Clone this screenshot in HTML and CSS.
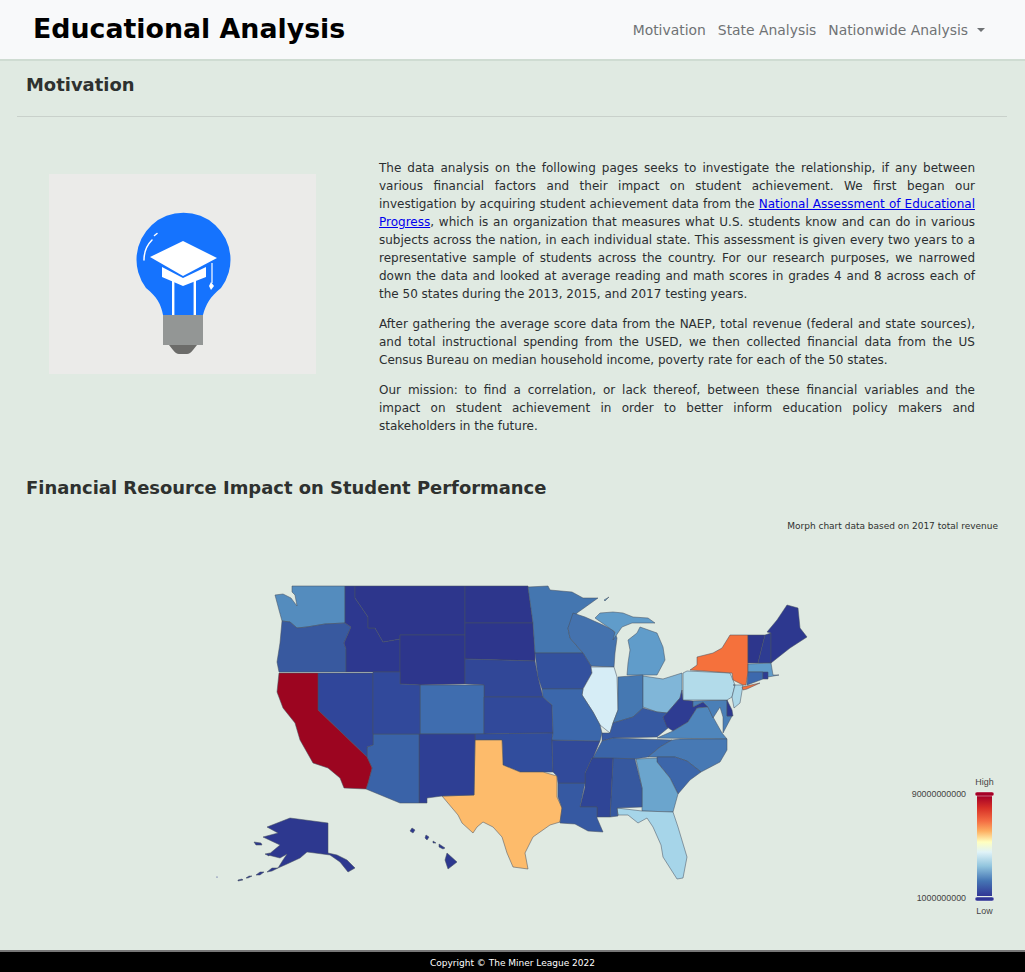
FILE: index.html
```html
<!DOCTYPE html>
<html lang="en">
<head>
  <meta charset="UTF-8">
  <meta name="viewport" content="width=device-width, initial-scale=1.0">
  <title>Educational Analysis</title>
  <link rel="stylesheet" href="styles.css">
</head>
<body>

  <nav class="navbar">
    <a class="brand" href="#">Educational Analysis</a>
    <ul class="nav-links">
      <li><a href="#">Motivation</a></li>
      <li><a href="#">State Analysis</a></li>
      <li><a href="#" class="dropdown">Nationwide Analysis</a></li>
    </ul>
  </nav>

  <main class="content">
    <h2 class="section-title">Motivation</h2>
    <hr class="divider">

    <section class="motivation">
      <div class="picture">
        <svg class="bulb" viewBox="0 0 267 200" width="267" height="200">
          <path fill="#1573fe" d="M114 141C112 130 108 123 97 114A47 47 0 1 1 172 114C161 123 157 130 154 141Z"/>
          <rect x="114" y="141" width="40" height="30" fill="#939695"/>
          <path fill="#6c6c6a" d="M120 171H148L144 176Q141 180 138 180H130Q127 180 124 176Z"/>
          <rect x="123" y="106" width="2.4" height="35" fill="#fff"/>
          <rect x="144.600" y="106" width="2.4" height="35" fill="#fff"/>
          <path fill="#fff" d="M113 93L134 104L157 93V103L134 112L113 103Z"/>
          <path fill="#fff" d="M134 67L168 84L134 102L101 83Z"/>
          <path fill="none" stroke="#fff" stroke-width="1.200" d="M163 89V109"/>
          <path fill="#fff" d="M162 108L165 112L162 116L160 112Z"/>
          <path fill="none" stroke="#fff" stroke-width="1.500" stroke-linecap="round" d="M95 86C95 77 98 71 103 66M105.500 61.500L108 59.500"/>
        </svg>
      </div>
      <div class="copy">
        <p>The data analysis on the following pages seeks to investigate the relationship, if any between various financial factors and their impact on student achievement. We first began our investigation by acquiring student achievement data from the <a href="#">National Assessment of Educational Progress</a>, which is an organization that measures what U.S. students know and can do in various subjects across the nation, in each individual state. This assessment is given every two years to a representative sample of students across the country. For our research purposes, we narrowed down the data and looked at average reading and math scores in grades 4 and 8 across each of the 50 states during the 2013, 2015, and 2017 testing years.</p>
        <p>After gathering the average score data from the NAEP, total revenue (federal and state sources), and total instructional spending from the USED, we then collected financial data from the US Census Bureau on median household income, poverty rate for each of the 50 states.</p>
        <p>Our mission: to find a correlation, or lack thereof, between these financial variables and the impact on student achievement in order to better inform education policy makers and stakeholders in the future.</p>
      </div>
    </section>

    <h2 class="section-title chart-title">Financial Resource Impact on Student Performance</h2>
    <p class="chart-note">Morph chart data based on 2017 total revenue</p>

    <svg class="chart" viewBox="0 570 1025 350" width="1025" height="350">
      <defs>
        <linearGradient id="scale" x1="0" y1="0" x2="0" y2="1">
          <stop offset="0" stop-color="#a50026"/>
          <stop offset="0.12" stop-color="#d73027"/>
          <stop offset="0.25" stop-color="#f46d43"/>
          <stop offset="0.35" stop-color="#fdae61"/>
          <stop offset="0.46" stop-color="#ffffbf"/>
          <stop offset="0.56" stop-color="#e0f3f8"/>
          <stop offset="0.7" stop-color="#92c5de"/>
          <stop offset="0.85" stop-color="#4575b4"/>
          <stop offset="1" stop-color="#313695"/>
        </linearGradient>
      </defs>
      <g class="states">
        <polygon fill="#548cbe" points="292,586 345,586 345,623 325,624 307,627 297,628 290,622 282,621 279,610 275,595 283,594 291,598 297,606 295,595 292,592"/>
        <polygon fill="#38599f" points="282,621 290,622 297,628 307,627 325,624 345,623 351,627 344,643 346,649 346,672 279,672 277,662 280,643"/>
        <polygon fill="#2d388f" points="345,586 355,586 355,598 368,617 368,628 375,628 383,642 400,639 400,672 346,672 346,649 344,643 351,627 345,623"/>
        <polygon fill="#2d368c" points="355,586 465,586 465,635 400,635 400,639 383,642 375,628 368,628 368,617 355,598"/>
        <polygon fill="#2d368c" points="400,635 465,635 465,684 420,685 400,684"/>
        <polygon fill="#2d368c" points="465,586 528,586 533,623 465,623"/>
        <polygon fill="#2d368c" points="465,623 533,623 535,653 535,661 465,659"/>
        <polygon fill="#314797" points="465,659 535,661 538,677 543,697 484,697 484,685 465,684"/>
        <polygon fill="#3f6daf" points="420,685 484,685 484,734 420,734"/>
        <polygon fill="#31499a" points="484,697 543,697 552,705 553,733 484,734"/>
        <polygon fill="#314d9d" points="475,734 553,733 552,740 553,772 543,772 520,772 503,765 502,740 475,740"/>
        <polygon fill="#fdbb6b" points="475,740 502,740 503,765 520,772 543,772 557,776 557,797 562,808 560,822 550,825 533,837 525,853 528,869 513,867 507,853 502,837 493,827 483,822 477,827 473,833 462,823 458,815 442,796 474,795"/>
        <polygon fill="#2e3f94" points="419,734 475,734 475,740 474,795 442,796 427,798 427,803 419,803"/>
        <polygon fill="#3a63a8" points="373,734 419,734 419,803 400,803 366,789 368,783 372,768 367,757 367,747 373,745"/>
        <polygon fill="#30469a" points="318,673 373,673 373,745 367,747 367,757 318,710"/>
        <polygon fill="#31499b" points="373,672 400,672 400,684 420,685 420,734 373,734"/>
        <polygon fill="#9c0520" points="279,673 318,673 318,710 367,757 372,768 368,783 366,789 344,788 340,778 328,768 313,763 300,740 295,723 283,708 277,692"/>
        <polygon fill="#4476b0" points="528,587 548,586 550,590 572,592 583,598 598,598 577,613 568,628 570,638 583,653 535,653 533,623"/>
        <polygon fill="#4472ae" points="573,613 585,617 603,625 613,630 615,633 617,638 615,653 614,667 591,666 583,653 570,638 568,628"/>
        <polygon fill="#609cca" points="595,618 600,613 613,612 623,613 633,617 648,618 655,623 640,623 632,623 622,627 613,640 615,632"/>
        <polygon fill="#609cca" points="640,627 657,633 663,647 665,660 657,675 627,675 628,663 630,650 628,640 637,633"/>
        <polygon fill="#609cca" points="604,600 609,597 605,601"/>
        <polygon fill="#33519e" points="535,653 583,653 591,666 592,673 583,689 542,689 538,677"/>
        <polygon fill="#d6edf6" points="591,667 614,667 617,677 618,710 613,723 610,733 600,725 593,712 582,695 583,689 592,673"/>
        <polygon fill="#4578b2" points="618,677 643,675 643,708 633,717 613,723 618,710"/>
        <polygon fill="#80b6d8" points="643,676 663,679 682,673 682,690 680,698 667,713 657,712 643,707"/>
        <polygon fill="#3659a2" points="613,723 633,717 643,708 657,712 667,713 663,717 668,728 657,737 613,738 602,741 602,733 610,733"/>
        <polygon fill="#2e3c92" points="682,690 683,700 693,701 693,707 703,702 708,707 697,708 688,722 673,731 667,727 663,717 667,713 680,698"/>
        <polygon fill="#4f86bc" points="657,738 673,731 688,722 697,708 708,707 713,717 722,733 727,739"/>
        <polygon fill="#4a7fb7" points="693,701 727,700 727,716 732,716 723,733 723,717 720,707 713,718 708,707 703,702 693,707"/>
        <polygon fill="#2d388f" points="727,700 732,710 733,716 727,716"/>
        <polygon fill="#b2dbea" points="683,673 687,671 730,673 735,685 732,697 727,700 683,700"/>
        <polygon fill="#add8e8" points="733,685 743,685 740,703 734,708 732,697 735,685"/>
        <polygon fill="#f5713c" points="690,670 697,665 697,657 713,653 722,648 730,635 748,635 748,672 746,685 743,685 733,680 732,673"/>
        <polygon fill="#f5713c" points="742,687 760,683 747,689 743,690"/>
        <polygon fill="#2d368c" points="748,635 765,635 758,663 748,663"/>
        <polygon fill="#2e3c92" points="765,635 771,633 771,663 758,663"/>
        <polygon fill="#2d388f" points="767,632 777,620 787,605 798,608 800,628 807,637 790,648 771,663 771,633"/>
        <polygon fill="#609cca" points="748,664 771,663 773,675 779,675 768,677 763,672 748,672"/>
        <polygon fill="#3d69ad" points="748,672 763,672 763,679 747,685"/>
        <polygon fill="#2e3c92" points="763,672 768,672 768,679 763,679"/>
        <polygon fill="#3a64a8" points="602,741 613,738 672,740 660,747 648,757 635,759 593,758"/>
        <polygon fill="#4779b4" points="672,740 680,739 727,739 727,750 720,762 701,772 687,761 675,757 657,757 648,757 660,747"/>
        <polygon fill="#3c66aa" points="657,757 675,757 687,761 701,772 690,780 678,794 670,778 657,762"/>
        <polygon fill="#6ba5cd" points="636,759 657,758 657,762 670,778 678,794 673,812 642,811 642,788"/>
        <polygon fill="#a6d5e9" points="617,808 642,811 673,812 678,827 687,857 683,878 677,879 663,857 661,845 653,827 647,818 638,823 628,815 618,815"/>
        <polygon fill="#36589f" points="613,758 635,759 642,788 642,807 617,808 618,816 610,817"/>
        <polygon fill="#2f4596" points="592,758 613,758 610,817 597,817 597,807 580,807 585,787 585,773"/>
        <polygon fill="#3659a2" points="558,783 585,783 580,807 597,807 597,818 603,832 588,831 575,824 560,823 562,808 558,797"/>
        <polygon fill="#314a9a" points="552,740 600,741 593,758 592,758 585,773 585,783 558,783 557,776 553,772"/>
        <polygon fill="#3b67ab" points="542,689 583,689 582,695 593,712 600,725 602,733 600,741 552,740 553,733 552,705 543,697"/>
        <!-- alaska and hawaii -->
        <polygon fill="#2d388f" points="290,818 328,823 328,853 337,855 347,860 355,868 348,872 340,862 330,855 315,853 307,852 300,858 287,864 278,868 283,860 287,854 280,858 268,855 280,845 263,837 278,833 267,827"/>
        <polygon fill="#2d388f" points="278,868 272,871 267,872 272,868"/>
        <polygon fill="#2d388f" points="264,872 260,875 256,875 260,872"/>
        <polygon fill="#2d388f" points="252,876 248,878 246,878 249,876"/>
        <polygon fill="#2d388f" points="243,880 238,881 238,880 242,879"/>
        <polygon fill="#2d388f" points="254,842 261,843 262,845 256,845"/>
        <polygon fill="#2d388f" points="265,854 270,853 269,856"/>
        <polygon fill="#2d388f" points="447,853 457,862 448,869 445,860"/>
        <polygon fill="#2d388f" points="412,828 415,830 413,833 410,831"/>
        <polygon fill="#2d388f" points="426,835 429,837 427,840 425,838"/>
        <polygon fill="#2d388f" points="433,841 436,843 433,843"/>
        <polygon fill="#2d388f" points="439,844 445,848 443,849 439,847"/>
        <circle cx="217" cy="877" r="0.6" fill="#2d388f"/>
      </g>
      <g class="legend">
        <rect x="977" y="796" width="15" height="100" fill="url(#scale)"/>
        <rect x="975" y="792" width="19" height="4" rx="2" fill="#a50026" stroke="#fff" stroke-width="0.400"/>
        <rect x="975" y="897" width="19" height="4" rx="2" fill="#313695" stroke="#fff" stroke-width="0.400"/>
        <text x="984.500" y="785" text-anchor="middle">High</text>
        <text x="966" y="797" text-anchor="end">90000000000</text>
        <text x="966" y="901" text-anchor="end">1000000000</text>
        <text x="984.500" y="914" text-anchor="middle">Low</text>
      </g>
    </svg>
  </main>

  <footer class="footer">Copyright © The Miner League 2022</footer>

</body>
</html>
```

FILE: styles.css
```css
html, body {
  height: 100%;
}

body {
  margin: 0;
  padding: 0;
  font-family: 'DejaVu Sans', sans-serif;
  background: #e0eae2;
  color: #212529;
  display: flex;
  flex-direction: column;
  overflow: hidden;
}

.navbar {
  display: flex;
  align-items: center;
  justify-content: space-between;
  height: 59px;
  padding: 0 40px 0 33px;
  background: #f8f9fa;
  border-bottom: 2px solid #cfdcd2;
  flex-shrink: 0;
}

.brand {
  color: #000;
  font-size: 26.8px;
  font-weight: bold;
  text-decoration: none;
  padding-bottom: 3px;
}

.nav-links {
  display: flex;
  gap: 12px;
  margin: 0;
  padding: 0;
  list-style: none;
}

.nav-links a {
  color: #6f7274;
  font-size: 13.9px;
  text-decoration: none;
}

.dropdown::after {
  content: "";
  display: inline-block;
  margin-left: 9px;
  vertical-align: 3px;
  border-top: 4px solid #6f7274;
  border-left: 4px solid transparent;
  border-right: 4px solid transparent;
}

.content {
  flex: 1;
  padding: 0 18px 0 17px;
}

.section-title {
  margin: 0;
  color: #2e312f;
  font-size: 17.95px;
  font-weight: bold;
  line-height: 22px;
  padding: 13px 9px 0;
}

.divider {
  margin: 20px 0 0;
  border: none;
  border-top: 1px solid #c9d1cb;
}

.motivation {
  display: flex;
  margin-top: 42px;
}

.picture {
  width: 362px;
  padding: 15px 0 0 32px;
  box-sizing: border-box;
  flex-shrink: 0;
}

.bulb {
  display: block;
  background: #ebebe9;
}

.copy {
  width: 596px;
  font-size: 12px;
  line-height: 18px;
  color: #2b2e31;
  text-align: justify;
}

.copy p {
  margin: 0 0 12px;
}

.copy a {
  color: #0000ee;
}

.chart-title {
  padding-top: 30px;
}

.chart-note {
  margin: 21px 9px 0 0;
  color: #2e312f;
  font-size: 9px;
  line-height: 12px;
  text-align: right;
}

.chart {
  display: block;
  margin: 38px 0 0 -17px;
}

.states polygon {
  stroke: rgba(70, 80, 95, 0.75);
  stroke-width: 0.7;
  stroke-linejoin: round;
}

.legend text {
  font-family: 'Liberation Sans', sans-serif;
  font-size: 8.9px;
  fill: #444;
}

.footer {
  flex-shrink: 0;
  height: 20px;
  line-height: 22px;
  background: #000;
  border-top: 2px solid #777;
  color: #fff;
  font-size: 9px;
  text-align: center;
}
```
